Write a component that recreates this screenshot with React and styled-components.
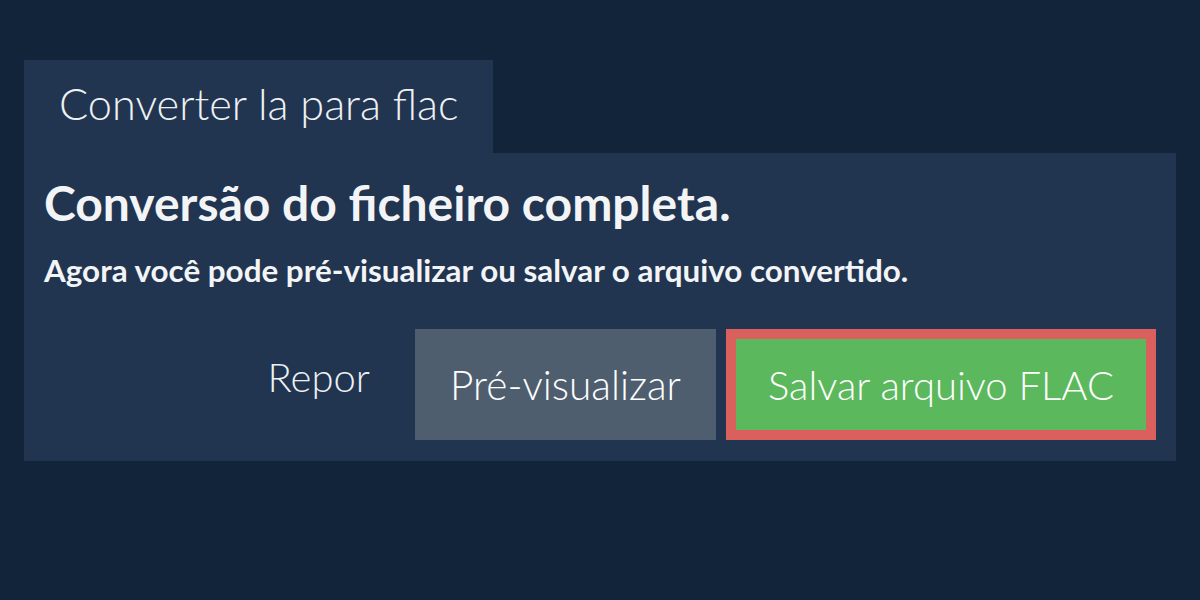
import React from "react";
import styled, { createGlobalStyle } from "styled-components";

const GlobalStyle = createGlobalStyle`
  html, body {
    margin: 0;
    padding: 0;
    background: #12243a;
    font-family: Lato, "Open Sans", sans-serif;
  }
`;

const Page = styled.div`
  width: 1200px;
  height: 600px;
  box-sizing: border-box;
  padding: 60px 24px 0;
  background: #12243a;
`;

const Tab = styled.div`
  display: inline-block;
  box-sizing: border-box;
  width: 469px;
  height: 93px;
  padding: 0 0 0 35px;
  background: #213550;
  color: #eef1f4;
  font-size: 43.3px;
  font-weight: 300;
  line-height: 86px;
`;

const Panel = styled.div`
  background: #213550;
  padding: 20px 20px 21px;
  color: #f3f4f6;
`;

const Title = styled.h1`
  margin: 0;
  font-size: 48px;
  font-weight: 700;
  line-height: 60px;
`;

const Subtitle = styled.p`
  margin: 17px 0 0;
  font-size: 31.4px;
  font-weight: 700;
  line-height: 40px;
`;

const Actions = styled.div`
  display: flex;
  justify-content: flex-end;
  align-items: stretch;
  gap: 10px;
  margin-top: 39px;
`;

const LinkButton = styled.button`
  background: none;
  border: none;
  color: #eef1f4;
  font-family: inherit;
  font-size: 40px;
  font-weight: 300;
  padding: 0 35px 16px 0;
  cursor: pointer;
`;

const Button = styled.button`
  box-sizing: border-box;
  width: ${({ $w }) => $w}px;
  height: 111px;
  padding: 0;
  border: ${({ $outline }) => ($outline ? "10px solid #d9605c" : "none")};
  background: ${({ $bg }) => $bg};
  color: #fff;
  font-family: inherit;
  font-size: ${({ $size }) => $size}px;
  font-weight: 300;
  text-align: center;
  cursor: pointer;
`;

export default function App() {
  return (
    <Page>
      <GlobalStyle />
      <Tab>Converter la para flac</Tab>
      <Panel>
        <Title>Conversão do ficheiro completa.</Title>
        <Subtitle>Agora você pode pré-visualizar ou salvar o arquivo convertido.</Subtitle>
        <Actions>
          <LinkButton>Repor</LinkButton>
          <Button $bg="#4e5e6f" $w={301} $size={40.6}>Pré-visualizar</Button>
          <Button $bg="#5cb85c" $outline $w={430} $size={40}>Salvar arquivo FLAC</Button>
        </Actions>
      </Panel>
    </Page>
  );
}
